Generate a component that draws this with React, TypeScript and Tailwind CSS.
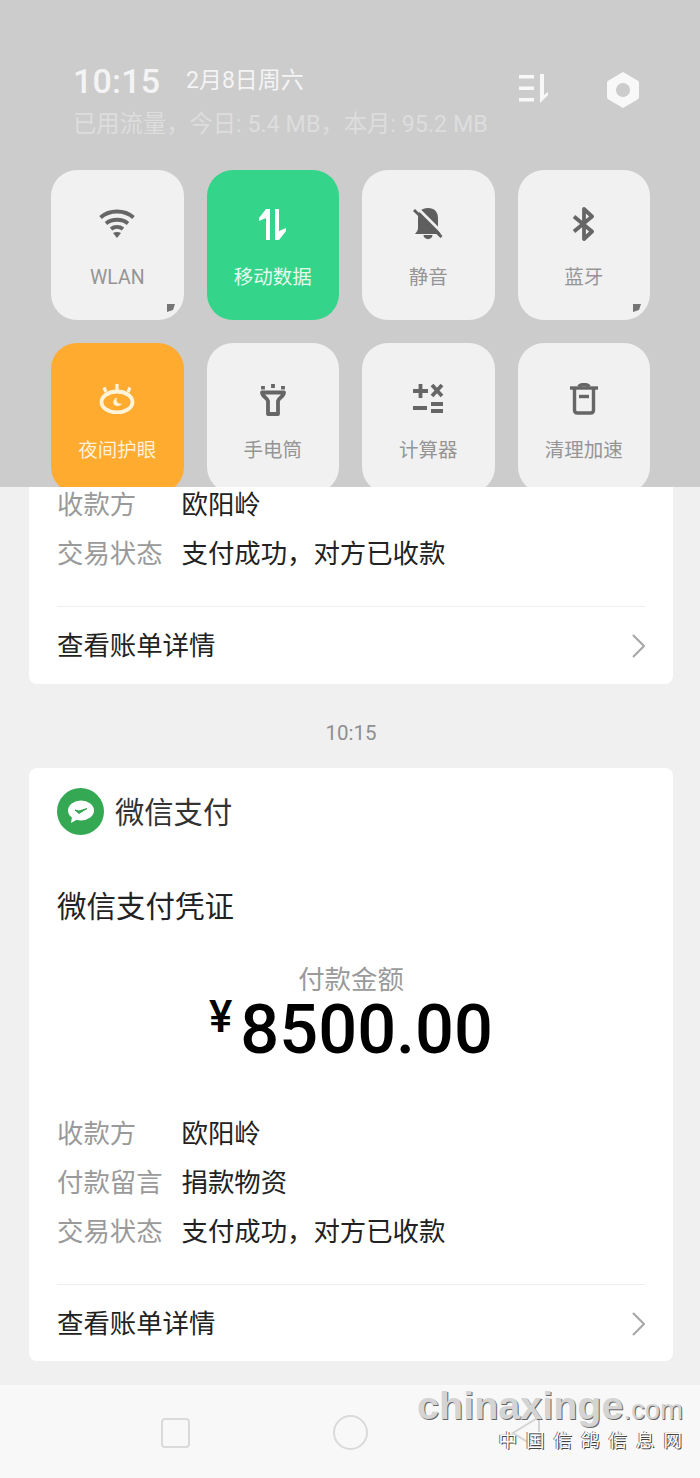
import type { ReactNode } from 'react';

const CJK = 'font-["Roboto","Noto_Sans_CJK_SC",sans-serif]';

function WifiIcon() {
  return (
    <svg width="36" height="30" viewBox="0 0 36 30" fill="none" stroke="#666666" strokeWidth="3.800">
      <path d="M1.500 8.500C10.500 .5 25.500 .5 34.500 8.500" />
      <path d="M7 14.500C13 9.500 23 9.500 29 14.500" />
      <path d="M12 20C15.500 17.300 20.500 17.300 24 20" />
      <path d="M18 29l-4-5c2.200-1.500 5.800-1.500 8 0z" fill="#666666" stroke="none" />
    </svg>
  );
}

function ArrowsIcon() {
  return (
    <svg width="27" height="31" viewBox="0 0 27 31" fill="white">
      <path d="M7 0h4v31H7V9l-7 3V9z" />
      <path d="M16 0h4v22l7-3v3l-7 9h-4z" />
    </svg>
  );
}

function MuteBellIcon() {
  return (
    <svg width="30" height="33" viewBox="0 0 30 33">
      <path d="M15 0c6.500 0 10 4 10 10v10c0 3 2 4 3 6H2c1-2 3-3 3-6V10C5 4 8.500 0 15 0z" fill="#5f5f5f" />
      <path d="M10.500 27h9c0 5.500-9 5.500-9 0z" fill="#5f5f5f" />
      <path d="M6 1.500l23 23" stroke="#f1f1f1" strokeWidth="2.600" />
      <path d="M1 2l27.500 27" stroke="#5f5f5f" strokeWidth="3" />
    </svg>
  );
}

function BluetoothIcon() {
  return (
    <svg width="24" height="34" viewBox="0 0 24 34" fill="none" stroke="#666666" strokeWidth="3.800" strokeLinejoin="round">
      <path d="M2 9.500l18 15-8 7.500V2l8 7.500-18 15" />
    </svg>
  );
}

function EyeIcon() {
  return (
    <svg className="mt-[4px]" width="36" height="30" viewBox="0 0 36 30" fill="none" stroke="#fff3da" strokeWidth="3.800">
      <ellipse cx="18" cy="18" rx="15.500" ry="10.500" />
      <path d="M7 8L5 3.500M18 6V0M29 8l2-4.500" strokeWidth="3.200" />
      <path d="M18 13.500c-1.500 4 1 7 5 6-1.500 3-5.500 3-7.500 1.500-2-2-1.500-6 2.500-7.500z" fill="#fff3da" stroke="none" />
    </svg>
  );
}

function TorchIcon() {
  return (
    <svg className="mt-[4px]" width="26" height="33" viewBox="0 0 26 33" fill="none" stroke="#666666" strokeWidth="3.800" strokeLinejoin="round">
      <path d="M2 9.500c0 4 5 5 6 8.500v13h10V18c1-3.500 6-4.500 6-8.500z" />
      <path d="M13 1v4M3 3v3.500M23 3v3.500" />
    </svg>
  );
}

function CalcIcon() {
  return (
    <svg className="mt-[4px]" width="32" height="32" viewBox="0 0 32 32" stroke="#666666" strokeWidth="3.800" fill="none">
      <path d="M1 8h15M8.500 1v14M20 2l10 11M30 2L20 13" />
      <path d="M1 25h14M19 21h12M19 28h12" />
    </svg>
  );
}

function BinIcon() {
  return (
    <svg className="mt-[4px]" width="28" height="32" viewBox="0 0 28 32" fill="none" stroke="#666666" strokeWidth="3.400">
      <path d="M0 5h28" />
      <path d="M9 3.500c1-2.500 9-2.500 10 0" />
      <path d="M4.500 6v21c0 2 1 3 3 3h13c2 0 3-1 3-3V6" />
      <path d="M9 13.500h10" />
    </svg>
  );
}

function Tile({ icon, label, tone = 'plain', corner = false }: { icon: ReactNode; label: string; tone?: 'plain' | 'green' | 'orange'; corner?: boolean }) {
  const bg = tone === 'green' ? 'bg-[#34d58a]' : tone === 'orange' ? 'bg-[#ffab30]' : 'bg-[#f1f1f1]';
  const text = tone === 'plain' ? 'text-[#959595]' : tone === 'green' ? 'text-[#e4f9ee]' : 'text-[#fff0d8]';
  return (
    <div className={`relative h-[150px] rounded-[26px] ${bg} flex flex-col items-center`}>
      <div className="h-[36px] mt-[36px] flex items-center justify-center">{icon}</div>
      <div className={`mt-[22px] text-[19.500px] leading-[28px] ${text}`}>{label}</div>
      {corner && (
        <svg className="absolute right-[9px] bottom-[8px]" width="8" height="9" viewBox="0 0 8 9">
          <path d="M0 1h8L6 7 0 9z" fill="#757575" />
        </svg>
      )}
    </div>
  );
}

function Row({ label, value }: { label: string; value: string }) {
  return (
    <div className="flex h-[49px] items-center text-[26.400px]">
      <span className="w-[124.500px] text-[#9a9a9a]">{label}</span>
      <span className="text-[#222]">{value}</span>
    </div>
  );
}

function BillLink() {
  return (
    <div className="mt-[27px] border-t border-[#eeeeee] h-[78px] flex items-center justify-between">
      <span className="pt-[2px] text-[26.400px] text-[#222]">查看账单详情</span>
      <svg width="13" height="26" viewBox="0 0 13 26" fill="none" stroke="#a8a8a8" strokeWidth="2.200">
        <path d="M1 2l11 11L1 24" />
      </svg>
    </div>
  );
}

export default function App() {
  return (
    <div className={`relative w-[700px] h-[1478px] overflow-hidden bg-[#f0f0f0] ${CJK}`}>
      {/* quick settings shade */}
      <div className="h-[487px] overflow-hidden bg-[#cccccc] pl-[51px] pr-[50px]">
        <div className="h-[170px] flex justify-between pl-[22px] pr-[11px]">
          <div className="pt-[61px]">
            <div className="flex items-center h-[40px]">
              <span className="w-[113px] text-[34px] font-medium text-[#f4f4f4] tracking-[0.2px]">10:15</span>
              <span className="text-[23px] text-[#f4f4f4]">2月8日周六</span>
            </div>
            <div className="mt-[3px] text-[23.300px] leading-[40px] text-[#dddddd] whitespace-nowrap">已用流量，今日: 5.4 MB，本月: 95.2 MB</div>
          </div>
          <div className="flex gap-[59px] pt-[72px] h-fit">
            <svg width="29" height="29" viewBox="0 0 29 29" fill="#f8f8f8" className="mt-[2px]">
              <path d="M0 1h15v3.500H0zM0 12.500h15V16H0zM0 24h15v3.500H0z" />
              <path d="M21 0h4v21l4-3v3l-8 8z" />
            </svg>
            <svg width="32" height="36" viewBox="0 0 32 36">
              <path fillRule="evenodd" fill="#f8f8f8" d="M16 0l14.500 8.500c1 .5 1.500 1.500 1.500 2.500v14c0 1-.5 2-1.500 2.500L16 36 1.500 27.500C.5 27 0 26 0 25V11c0-1 .5-2 1.500-2.500zM16 11a7 7 0 1 0 0 14 7 7 0 0 0 0-14z" />
            </svg>
          </div>
        </div>
        <div className="grid grid-cols-4 gap-x-[23px] gap-y-[23px]">
          <Tile icon={<WifiIcon />} label="WLAN" corner />
          <Tile icon={<ArrowsIcon />} label="移动数据" tone="green" />
          <Tile icon={<MuteBellIcon />} label="静音" />
          <Tile icon={<BluetoothIcon />} label="蓝牙" corner />
          <Tile icon={<EyeIcon />} label="夜间护眼" tone="orange" />
          <Tile icon={<TorchIcon />} label="手电筒" />
          <Tile icon={<CalcIcon />} label="计算器" />
          <Tile icon={<BinIcon />} label="清理加速" />
        </div>
      </div>

      {/* chat messages */}
      <div className="pl-[29px] pr-[27px]">
        <div className="bg-white rounded-b-[8px] px-[28px] h-[197px] overflow-hidden">
          <div className="-mt-[6px]">
            <Row label="收款方" value="欧阳岭" />
            <Row label="交易状态" value="支付成功，对方已收款" />
          </div>
          <BillLink />
        </div>

        <div className="h-[84px] pt-[14px] flex items-center justify-center text-[20.500px] text-[#8f8f8f]">10:15</div>

        <div className="bg-white rounded-[8px] px-[28px] h-[593px]">
          <div className="pt-[20px] flex items-center gap-[11px]">
            <svg width="47" height="47" viewBox="0 0 47 47">
              <circle cx="23.500" cy="23.500" r="23.500" fill="#34a853" />
              <ellipse cx="24" cy="22.500" rx="13" ry="10" fill="#ffffff" />
              <path d="M15 29l-1 6 7-4z" fill="#ffffff" />
              <path d="M18 22l4 3.500 8-5-8 2.500z" fill="#34a853" stroke="#34a853" strokeWidth="1" />
            </svg>
            <span className="pt-[3px] text-[29.300px] leading-[40px] text-[#333]">微信支付</span>
          </div>
          <div className="mt-[49px] text-[29.500px] leading-[46px] text-[#222]">微信支付凭证</div>
          <div className="mt-[35px] text-center text-[26.400px] leading-[30px] text-[#9a9a9a]">付款金额</div>
          <div className="flex justify-center items-start h-[74px] text-black font-['Roboto',sans-serif] font-medium">
            <span className="text-[44px] leading-[50px] -mt-[3px] mr-[8px]">¥</span>
            <span className="text-[68.500px] leading-[56px] mt-[7px]">8500.00</span>
          </div>
          <div className="mt-[41px]">
            <Row label="收款方" value="欧阳岭" />
            <Row label="付款留言" value="捐款物资" />
            <Row label="交易状态" value="支付成功，对方已收款" />
          </div>
          <BillLink />
        </div>
      </div>

      {/* nav bar */}
      <div className="absolute left-0 right-0 bottom-0 h-[93px] bg-[#f8f8f8] flex items-center pl-[161px]">
        <div className="w-[29px] h-[30px] rounded-[4px] border-[2px] border-[#dadada] mt-[2px]" />
        <div className="ml-[143px] w-[35px] h-[35px] rounded-full border-[2px] border-[#dadada] mt-[2px]" />
        <svg className="ml-[143px] mt-[2px]" width="30" height="36" viewBox="0 0 30 36" fill="none" stroke="#d4d4d4" strokeWidth="2">
          <path d="M28 2L2 18l26 16z" />
        </svg>
      </div>

      {/* watermark */}
      <div className="absolute right-[17px] top-[1382px] flex flex-col items-end text-[#d4d4d4]">
        <div className="font-['Liberation_Sans',sans-serif] font-bold leading-[46px] [text-shadow:1px_1px_0_#666]">
          <span className="text-[39.500px]">chinaxinge</span>
          <span className="text-[27.500px] font-normal">.com</span>
        </div>
        <div className="-mt-[8px] text-[18.500px] leading-[24px] tracking-[9px] mr-[-8px] text-white [text-shadow:1px_1px_0_#444,-1px_0_0_#777]">中国信鸽信息网</div>
      </div>
    </div>
  );
}
